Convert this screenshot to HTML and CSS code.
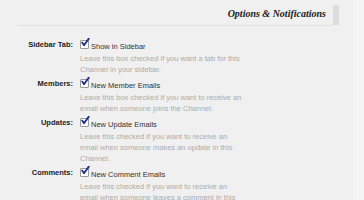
FILE: index.html
```html
<!DOCTYPE html>
<html>
<head>
<title>Channel Options</title>
<link rel="stylesheet" href="styles.css">
</head>
<body>

<div class="page">
  <div class="main">
    <div class="header">
      <h2>Options &amp; Notifications</h2>
      <div class="tab-edge"></div>
    </div>

    <div class="option">
      <div class="label">Sidebar Tab:</div>
      <div class="field">
        <div class="check"><span class="box"><svg width="10" height="10" viewBox="0 0 10 10"><path d="M2.2 4.6 L4 7.2 L8.8 0.6" fill="none" stroke="#1b2f86" stroke-width="1.8" stroke-linecap="round" stroke-linejoin="round"/></svg></span>Show in Sidebar</div>
        <p class="desc">Leave this box checked if you want a tab for this Channel in your sidebar.</p>
      </div>
    </div>

    <div class="option">
      <div class="label">Members:</div>
      <div class="field">
        <div class="check"><span class="box"><svg width="10" height="10" viewBox="0 0 10 10"><path d="M2.2 4.6 L4 7.2 L8.8 0.6" fill="none" stroke="#1b2f86" stroke-width="1.8" stroke-linecap="round" stroke-linejoin="round"/></svg></span>New Member Emails</div>
        <p class="desc">Leave this box checked if you want to receive an email when someone joins the Channel.</p>
      </div>
    </div>

    <div class="option">
      <div class="label">Updates:</div>
      <div class="field">
        <div class="check"><span class="box"><svg width="10" height="10" viewBox="0 0 10 10"><path d="M2.2 4.6 L4 7.2 L8.8 0.6" fill="none" stroke="#1b2f86" stroke-width="1.8" stroke-linecap="round" stroke-linejoin="round"/></svg></span>New Update Emails</div>
        <p class="desc">Leave this checked if you want to receive an email when someone makes an update in this Channel.</p>
      </div>
    </div>

    <div class="option">
      <div class="label">Comments:</div>
      <div class="field">
        <div class="check"><span class="box"><svg width="10" height="10" viewBox="0 0 10 10"><path d="M2.2 4.6 L4 7.2 L8.8 0.6" fill="none" stroke="#1b2f86" stroke-width="1.8" stroke-linecap="round" stroke-linejoin="round"/></svg></span>New Comment Emails</div>
        <p class="desc">Leave this checked if you want to receive an email when someone leaves a comment in this Channel.</p>
      </div>
    </div>
  </div>
  <div class="side"></div>
</div>

</body>
</html>
```

FILE: styles.css
```css
body { margin: 0; background: #f0f0f0; font-family: "Liberation Sans", Arial, sans-serif; }
.page { display: flex; min-height: 200px; }
.main { width: 353px; }
.side { flex: 1; background: #f5f5f5; }

.header {
  display: flex;
  margin: 5px 0 0 17px;
  width: 322px;
}
.header h2 {
  flex: 1;
  margin: 0;
  height: 20px;
  line-height: 18px;
  padding-right: 7px;
  text-align: right;
  font-family: "Liberation Serif", "Times New Roman", serif;
  font-style: italic;
  font-weight: bold;
  font-size: 10px;
  color: #222;
  border-bottom: 1px solid #e2e2e2;
}
.tab-edge { width: 6px; height: 20px; background: #dcdcdc; }

.option { display: flex; margin-top: 2px; }
.header + .option { margin-top: 12px; }
.label {
  width: 73px;
  text-align: right;
  font-weight: bold;
  font-size: 7.5px;
  line-height: 14px;
  color: #222;
}
.field { margin-left: 7px; width: 165px; }
.check {
  display: flex;
  align-items: flex-end;
  height: 14px;
  font-size: 7.5px;
  line-height: 11px;
  color: #333;
}
.box {
  position: relative;
  width: 7px;
  height: 7px;
  margin: 0 2px 3px 0;
  background: #fff;
  border: 1px solid #9a9a9a;
  border-radius: 1px;
}
.box svg { position: absolute; left: -1px; top: -3px; }
.desc {
  margin: 1px 0 0;
  font-size: 7.5px;
  line-height: 11px;
  color: #acacac;
}
```
